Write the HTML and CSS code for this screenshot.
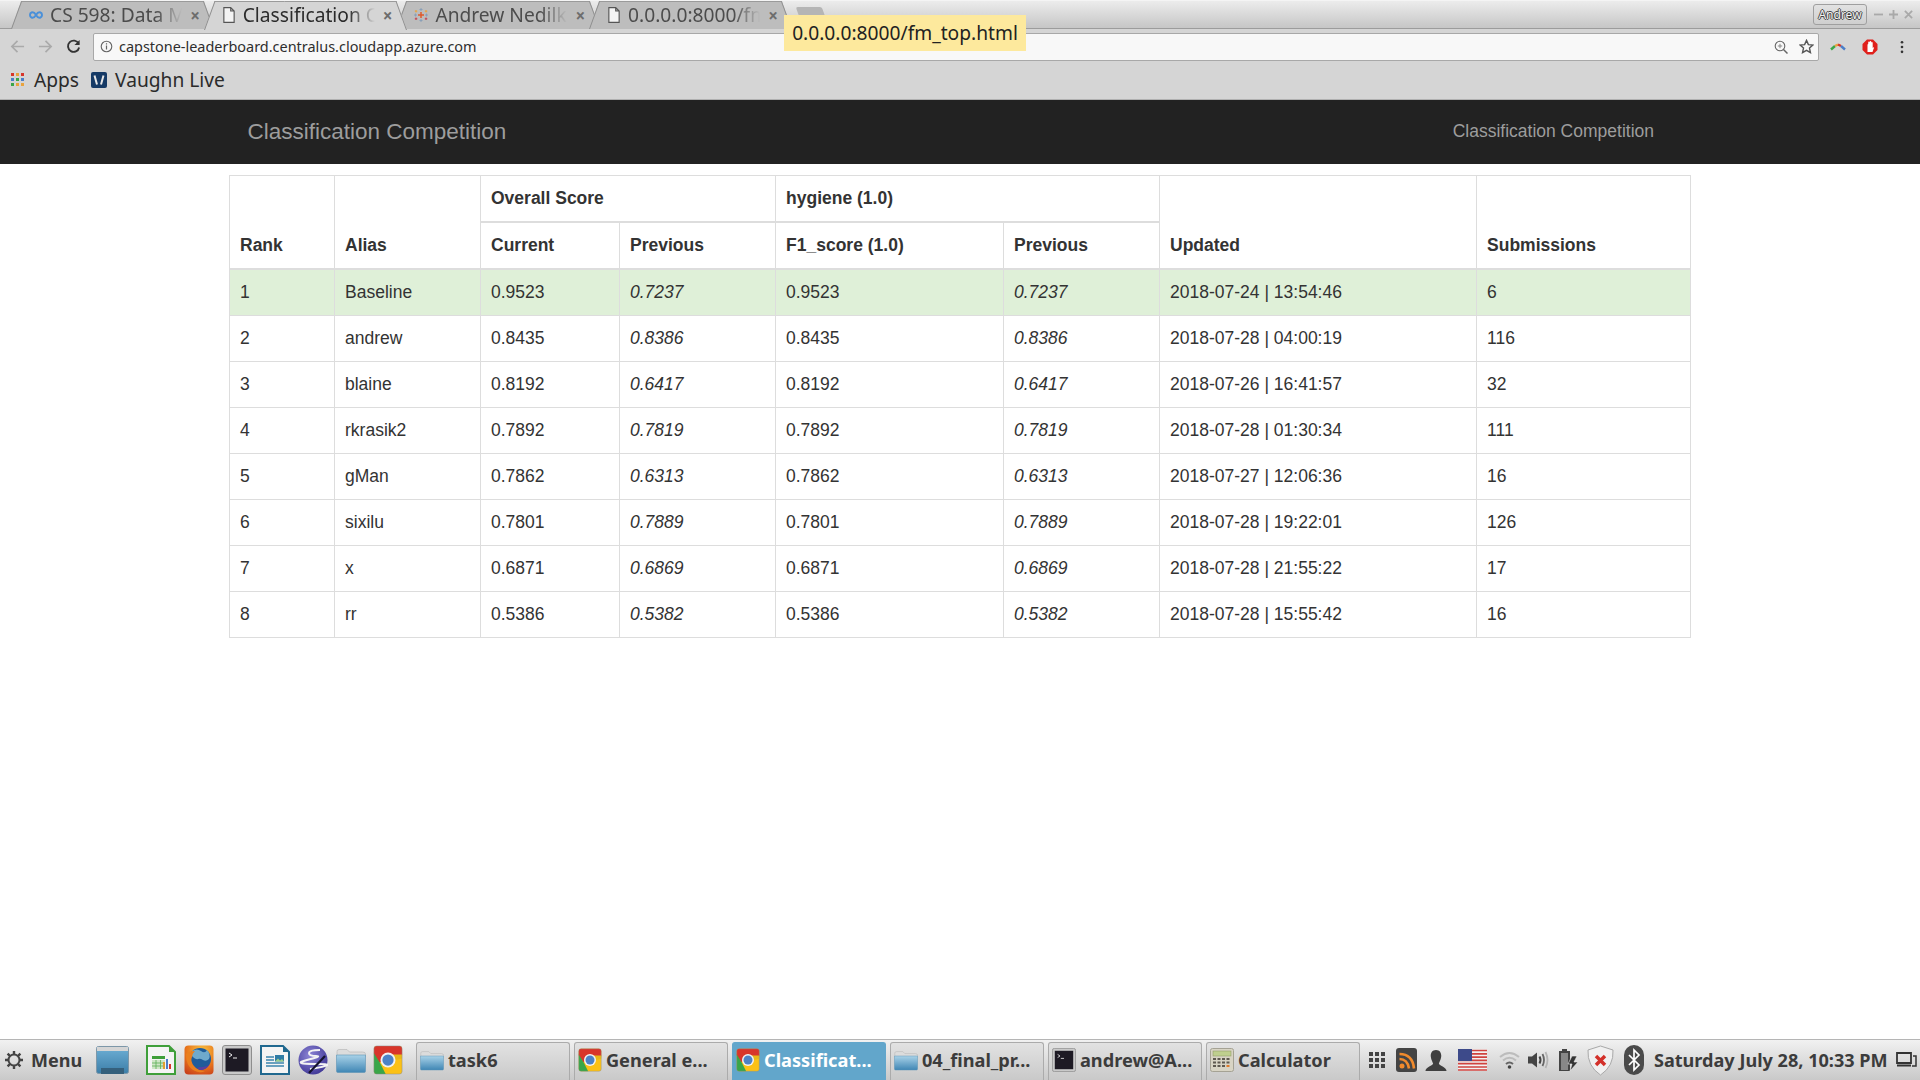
FILE: index.html
```html
<!DOCTYPE html>
<html lang="en">
<head>
    <meta charset="UTF-8">
    <title>Classification Competition</title>
    <link rel="stylesheet" href="styles.css">
</head>
<body>
    <!-- shared icons -->
    <svg class="sprite" xmlns="http://www.w3.org/2000/svg">
        <defs>
            <linearGradient id="folder-grad" x1="0" y1="0" x2="0" y2="1">
                <stop offset="0" stop-color="#a9d2e8"/>
                <stop offset="1" stop-color="#3f86b4"/>
            </linearGradient>
            <clipPath id="chrome-clip"><rect x="1" y="1" width="30" height="30" rx="3"/></clipPath>
            <symbol id="i-doc" viewBox="0 0 12 14">
                <path d="M1.5.5h6l3 3v10h-9z M7.5.5v3h3" fill="#f4f4f4" stroke="#555" stroke-width="1"/>
            </symbol>
            <symbol id="i-chrome" viewBox="0 0 32 32">
                <g clip-path="url(#chrome-clip)">
                    <rect width="32" height="32" fill="#fbc116"/>
                    <path d="M0 0h32v11H16L7 19 0 9z" fill="#d8352a"/>
                    <path d="M0 7l8 13 6 12H0z" fill="#3aa648"/>
                    <path d="M16 10h16v4l-16 4z" fill="#e8b817"/>
                    <circle cx="16" cy="16" r="8" fill="#f2f2f2"/>
                    <circle cx="16" cy="16" r="6" fill="#4c82c6"/>
                </g>
                <rect x="1" y="1" width="30" height="30" rx="3" fill="none" stroke="#8a8a8a" stroke-opacity=".5"/>
            </symbol>
            <symbol id="i-folder" viewBox="0 0 30 26">
                <path d="M1 4.5q0-2 2-2h8l2.500 2.500h13q3 0 3 2v3H1z" fill="#dcdcdc" stroke="#aaa" stroke-width=".5"/>
                <path d="M.5 8h29v16q0 1.500-1.500 1.500H2Q.5 25.500.5 24z" fill="url(#folder-grad)" stroke="#5d93b5" stroke-width=".6"/>
            </symbol>
            <symbol id="i-term" viewBox="0 0 30 30">
                <rect x=".5" y=".5" width="29" height="29" rx="2.500" fill="#c9c9c9" stroke="#8e8e8e"/>
                <rect x="3.500" y="3.500" width="23" height="23" fill="#1d1a24"/>
                <path d="M7 8l3 2-3 2M11 13h4" fill="none" stroke="#eee" stroke-width="1"/>
            </symbol>
        </defs>
    </svg>

    <div class="chrome">
        <div class="tabstrip">
            <div class="tab">
                <svg class="favicon" viewBox="0 0 16 16"><path d="M8 8C6.500 5.500 4.800 5 3.500 5.500 1.500 6.300 1.500 9.700 3.500 10.500 4.800 11 6.500 10.500 8 8c1.500-2.500 3.200-3 4.500-2.500 2 .8 2 4.200 0 5C11.200 11 9.500 10.500 8 8z" fill="none" stroke="#4a90d9" stroke-width="2"/></svg>
                <span class="tab-title">CS 598: Data M</span>
                <span class="tab-close">×</span>
            </div>
            <div class="tab tab-active">
                <svg class="favicon"><use href="#i-doc"/></svg>
                <span class="tab-title">Classification C</span>
                <span class="tab-close">×</span>
            </div>
            <div class="tab">
                <svg class="favicon" viewBox="0 0 16 16">
                    <path d="M8 5v6M5 8h6" stroke="#e0592a" stroke-width="1.500"/>
                    <path d="M8 1v3M6.500 2.500h3M8 12v3M6.500 13.500h3M1 8h3M2.500 6.500v3M12 8h3M13.500 6.500v3" stroke="#8aa0b8" stroke-width="1"/>
                    <path d="M3 3v2.500M1.800 4.200h2.500M13 3v2.500M11.800 4.200h2.500" stroke="#e8a33d" stroke-width="1"/>
                    <path d="M3 10.500V13M1.800 11.800h2.500M13 10.500V13M11.800 11.800h2.500" stroke="#c7404d" stroke-width="1"/>
                </svg>
                <span class="tab-title">Andrew Nedilk</span>
                <span class="tab-close">×</span>
            </div>
            <div class="tab">
                <svg class="favicon"><use href="#i-doc"/></svg>
                <span class="tab-title">0.0.0.0:8000/fm</span>
                <span class="tab-close">×</span>
            </div>
            <div class="newtab"></div>
            <div class="profile-btn">Andrew</div>
            <div class="win-controls">
                <svg viewBox="0 0 10 10"><path d="M0 5h10" stroke="#a9a9a9" stroke-width="2"/></svg>
                <svg viewBox="0 0 10 10"><path d="M0 5h10M5 0v10" stroke="#a9a9a9" stroke-width="2"/></svg>
                <svg viewBox="0 0 10 10"><path d="M1 1l8 8M9 1l-8 8" stroke="#a9a9a9" stroke-width="2"/></svg>
            </div>
        </div>
        <div class="tooltip">0.0.0.0:8000/fm_top.html</div>

        <div class="toolbar">
            <svg class="nav-btn" viewBox="0 0 16 16"><path d="M15 8H2M8 2L2 8l6 6" fill="none" stroke="#aaa" stroke-width="1.800"/></svg>
            <svg class="nav-btn" viewBox="0 0 16 16"><path d="M1 8h13M8 2l6 6-6 6" fill="none" stroke="#aaa" stroke-width="1.800"/></svg>
            <svg class="nav-btn" viewBox="0 0 16 16"><path d="M13.500 5A6 6 0 1 0 14 9" fill="none" stroke="#333" stroke-width="2"/><path d="M14.500 1v5.500H9z" fill="#333"/></svg>
            <div class="omnibox">
                <svg class="info-icon" viewBox="0 0 14 14"><circle cx="7" cy="7" r="5.700" fill="none" stroke="#666" stroke-width="1.200"/><path d="M7 6v4.200M7 3.500v1.300" stroke="#666" stroke-width="1.300"/></svg>
                <span class="url">capstone-leaderboard.centralus.cloudapp.azure.com</span>
                <svg class="zoom-icon" viewBox="0 0 14 14"><circle cx="6" cy="6" r="4.800" fill="none" stroke="#666" stroke-width="1.100"/><path d="M9.500 9.500L13.500 13.500" stroke="#666" stroke-width="1.500"/><path d="M6 3.800v4.400M3.800 6h4.400" stroke="#888"/></svg>
                <svg class="star-icon" viewBox="0 0 16 16"><path d="M8 1.500l2 4.500 4.800.5-3.600 3.200 1 4.800L8 12.100 3.800 14.500l1-4.800L1.200 6.500 6 6z" fill="none" stroke="#555" stroke-width="1.500"/></svg>
            </div>
            <svg class="ext-arc" viewBox="0 0 16 8">
                <path d="M1 6.500L5 3" stroke="#3aa648" stroke-width="2.400"/>
                <path d="M5 3L8 1.500" stroke="#e8a33d" stroke-width="2.400"/>
                <path d="M8 1.500L11 3" stroke="#d8352a" stroke-width="2.400"/>
                <path d="M11 3L15 6.500" stroke="#4a7ec8" stroke-width="2.400"/>
            </svg>
            <svg class="ext-stop" viewBox="0 0 16 16">
                <path d="M5 .5h6L15.500 5v6L11 15.500H5L.5 11V5z" fill="#e0201c"/>
                <path d="M5.500 13V6q0-1 .7-1V3.500q0-1 .8-1t.8 1V3q0-1 .7-1 .8 0 .8 1v.8q0-.8.7-.8t.7 1v5q.8-1 1.300-.6.300.3-.4 1.400L10.500 13z" fill="#fff"/>
            </svg>
            <svg class="menu-dots" viewBox="0 0 4 16"><circle cx="2" cy="2.500" r="1.500" fill="#333"/><circle cx="2" cy="8" r="1.500" fill="#333"/><circle cx="2" cy="13.500" r="1.500" fill="#333"/></svg>
        </div>

        <div class="bookmarks">
            <svg class="apps-icon" viewBox="0 0 14 14">
                <rect x="0" y="0" width="3" height="3" fill="#d8352a"/><rect x="5" y="0" width="3" height="3" fill="#e8a33d"/><rect x="10" y="0" width="3" height="3" fill="#d8352a"/>
                <rect x="0" y="5" width="3" height="3" fill="#4a7ec8"/><rect x="5" y="5" width="3" height="3" fill="#3aa648"/><rect x="10" y="5" width="3" height="3" fill="#4a7ec8"/>
                <rect x="0" y="10" width="3" height="3" fill="#3aa648"/><rect x="5" y="10" width="3" height="3" fill="#e8a33d"/><rect x="10" y="10" width="3" height="3" fill="#e8a33d"/>
            </svg>
            <span class="bm-label">Apps</span>
            <svg class="vaughn-icon" viewBox="0 0 16 16"><rect width="16" height="16" rx="2" fill="#163a66"/><path d="M3.500 3.500l2.500 9M12.500 3.500l-2.500 9" stroke="#e8e8e8" stroke-width="2"/></svg>
            <span class="bm-label">Vaughn Live</span>
        </div>
    </div>

    <div class="navbar">
        <div class="container navbar-inner">
            <a class="navbar-brand">Classification Competition</a>
            <a class="nav-link">Classification Competition</a>
        </div>
    </div>

    <div class="container page">
        <table class="table">
            <colgroup>
                <col class="col-rank"><col class="col-alias"><col class="col-cur"><col class="col-prev">
                <col class="col-f1"><col class="col-prev"><col class="col-updated"><col class="col-subs">
            </colgroup>
            <thead>
                <tr>
                    <th rowspan="2">Rank</th>
                    <th rowspan="2">Alias</th>
                    <th colspan="2">Overall Score</th>
                    <th colspan="2">hygiene (1.0)</th>
                    <th rowspan="2">Updated</th>
                    <th rowspan="2">Submissions</th>
                </tr>
                <tr>
                    <th>Current</th>
                    <th>Previous</th>
                    <th>F1_score (1.0)</th>
                    <th>Previous</th>
                </tr>
            </thead>
            <tbody>
                <tr class="success">
                    <td>1</td><td>Baseline</td><td>0.9523</td><td><em>0.7237</em></td><td>0.9523</td><td><em>0.7237</em></td><td>2018-07-24 | 13:54:46</td><td>6</td>
                </tr>
                <tr>
                    <td>2</td><td>andrew</td><td>0.8435</td><td><em>0.8386</em></td><td>0.8435</td><td><em>0.8386</em></td><td>2018-07-28 | 04:00:19</td><td>116</td>
                </tr>
                <tr>
                    <td>3</td><td>blaine</td><td>0.8192</td><td><em>0.6417</em></td><td>0.8192</td><td><em>0.6417</em></td><td>2018-07-26 | 16:41:57</td><td>32</td>
                </tr>
                <tr>
                    <td>4</td><td>rkrasik2</td><td>0.7892</td><td><em>0.7819</em></td><td>0.7892</td><td><em>0.7819</em></td><td>2018-07-28 | 01:30:34</td><td>111</td>
                </tr>
                <tr>
                    <td>5</td><td>gMan</td><td>0.7862</td><td><em>0.6313</em></td><td>0.7862</td><td><em>0.6313</em></td><td>2018-07-27 | 12:06:36</td><td>16</td>
                </tr>
                <tr>
                    <td>6</td><td>sixilu</td><td>0.7801</td><td><em>0.7889</em></td><td>0.7801</td><td><em>0.7889</em></td><td>2018-07-28 | 19:22:01</td><td>126</td>
                </tr>
                <tr>
                    <td>7</td><td>x</td><td>0.6871</td><td><em>0.6869</em></td><td>0.6871</td><td><em>0.6869</em></td><td>2018-07-28 | 21:55:22</td><td>17</td>
                </tr>
                <tr>
                    <td>8</td><td>rr</td><td>0.5386</td><td><em>0.5382</em></td><td>0.5386</td><td><em>0.5382</em></td><td>2018-07-28 | 15:55:42</td><td>16</td>
                </tr>
            </tbody>
        </table>
    </div>

    <div class="taskbar">
        <div class="menu-btn">
            <svg class="gear" viewBox="0 0 20 20"><circle cx="10" cy="10" r="5.500" fill="none" stroke="#444" stroke-width="2"/><path d="M10 1v3.500M10 15.500V19M1 10h3.500M15.500 10H19M3.600 3.600l2.500 2.500M13.900 13.900l2.500 2.500M3.600 16.400l2.500-2.500M13.900 6.100l2.500-2.500" stroke="#444" stroke-width="2.400"/></svg>
            <span>Menu</span>
        </div>
        <div class="launchers">
            <svg class="launch launch-desktop" viewBox="0 0 33 28">
                <defs><linearGradient id="desk-grad" x1="0" y1="0" x2="0" y2="1"><stop offset="0" stop-color="#6fb0d6"/><stop offset="1" stop-color="#3c7ea8"/></linearGradient></defs>
                <rect x=".5" y=".5" width="32" height="27" rx="2" fill="url(#desk-grad)" stroke="#7d97a8"/>
                <rect x="1" y="1" width="31" height="4" fill="#d5d5d5"/>
                <rect x="5" y="22" width="23" height="6" fill="#35607c"/>
            </svg>
            <svg class="launch" viewBox="0 0 30 30">
                <path d="M1 1h22l6 6v22H1z" fill="#f4f4f4" stroke="#3f9f3a" stroke-width="2"/>
                <path d="M23 1v6h6z" fill="#3f9f3a"/>
                <rect x="6" y="11" width="13" height="3" fill="#3f9f3a"/>
                <path d="M6 15h13v9H6z" fill="#cfe6c6"/>
                <path d="M6 18h13M6 21h13M10 15v9M14.500 15v9" stroke="#5cae55" stroke-width=".8"/>
                <rect x="17" y="17" width="2" height="7" fill="#e0a030"/><rect x="20" y="14" width="2" height="10" fill="#4a7ec8"/><rect x="23" y="19" width="2" height="5" fill="#d8352a"/>
            </svg>
            <svg class="launch" viewBox="0 0 30 30">
                <defs><radialGradient id="fox-grad" cx=".6" cy=".2" r=".9"><stop offset="0" stop-color="#f9c440"/><stop offset=".6" stop-color="#e8751c"/><stop offset="1" stop-color="#c9411b"/></radialGradient></defs>
                <rect x=".5" y=".5" width="29" height="29" rx="4" fill="url(#fox-grad)"/>
                <circle cx="16" cy="14" r="11" fill="#1f5c9a"/>
                <path d="M8 6q5-3 9 0t6-1q4 4 2 9-3 3-6 1t-5-1-6-3z" fill="#6fa9cc"/>
                <path d="M16 25q6 0 10-6-3 3-7 3t-6 1z" fill="#5b3fa0"/>
                <path d="M2 9q0 15 12 18 4 1 7-1-7 0-11-5T8 12q0-3 3-6-6 0-9 3z" fill="#ea7f1e"/>
            </svg>
            <svg class="launch"><use href="#i-term"/></svg>
            <svg class="launch" viewBox="0 0 30 30">
                <path d="M1 1h22l6 6v22H1z" fill="#f4f4f4" stroke="#20688f" stroke-width="2"/>
                <path d="M23 1v6h6z" fill="#20688f"/>
                <path d="M6 12h8M6 15h8M6 18h18M6 21h18" stroke="#3a84ad" stroke-width="1.500"/>
                <rect x="15" y="10" width="9" height="6.500" fill="#2f7ca6"/>
                <path d="M15 16.500l3-3 2 2 2-1.500 2 2.500z" fill="#9ccf8a"/>
            </svg>
            <svg class="launch" viewBox="0 0 30 30">
                <defs><radialGradient id="emacs-grad" cx=".4" cy=".35" r=".7"><stop offset="0" stop-color="#8e86d6"/><stop offset="1" stop-color="#3f3796"/></radialGradient></defs>
                <circle cx="15" cy="15" r="14.500" fill="url(#emacs-grad)"/>
                <path d="M22 5q-11 0-11 3t7 3-9 4 9 4-6 5" fill="none" stroke="#f4f4f4" stroke-width="2"/>
                <path d="M11 28L27 11" stroke="#15132e" stroke-width="2.200"/>
            </svg>
            <svg class="launch"><use href="#i-folder"/></svg>
            <svg class="launch"><use href="#i-chrome"/></svg>
        </div>
        <div class="winlist">
            <div class="win-btn"><svg class="win-icon"><use href="#i-folder"/></svg><span>task6</span></div>
            <div class="win-btn"><svg class="win-icon"><use href="#i-chrome"/></svg><span>General e...</span></div>
            <div class="win-btn win-active"><svg class="win-icon"><use href="#i-chrome"/></svg><span>Classificat...</span></div>
            <div class="win-btn"><svg class="win-icon"><use href="#i-folder"/></svg><span>04_final_pr...</span></div>
            <div class="win-btn"><svg class="win-icon"><use href="#i-term"/></svg><span>andrew@A...</span></div>
            <div class="win-btn">
                <svg class="win-icon" viewBox="0 0 24 24">
                    <rect x=".5" y=".5" width="23" height="23" rx="2" fill="#d8d4c4" stroke="#a5a294"/>
                    <rect x="3" y="3" width="18" height="5" fill="#bfcf8e" stroke="#8a9462" stroke-width=".5"/>
                    <path d="M3 11h3M7.500 11h3M12 11h3M16.500 11h3M3 14.500h3M7.500 14.500h3M12 14.500h3M16.500 14.500h3M3 18h3M7.500 18h3M12 18h3" stroke="#5f5a50" stroke-width="2"/>
                    <path d="M16.500 18h3" stroke="#e07b2a" stroke-width="2"/>
                </svg>
                <span>Calculator</span>
            </div>
        </div>
        <div class="tray">
            <svg class="tray-grid" viewBox="0 0 18 18">
                <path d="M1 1h4v4H1zM7 1h4v4H7zM13 1h4v4h-4zM1 7h4v4H1zM7 7h4v4H7zM13 7h4v4h-4zM1 13h4v4H1zM7 13h4v4H7zM13 13h4v4h-4z" fill="#444"/>
            </svg>
            <svg class="tray-rss" viewBox="0 0 21 24">
                <rect width="21" height="24" rx="3" fill="#444"/>
                <circle cx="6" cy="18" r="2.500" fill="#f08a2c"/>
                <path d="M3.500 11q8 0 9.500 9.500M3.500 6q13 0 14.500 14.500" fill="none" stroke="#f08a2c" stroke-width="2.600"/>
            </svg>
            <svg class="tray-user" viewBox="0 0 22 24"><path d="M11 1c4 0 5.500 3 5.500 6S14.500 14 14 15c0 2 8 4 8 8H0c0-4 8-6 8-8-.5-1-2.500-5-2.500-8S7 1 11 1z" fill="#3f3f3f"/></svg>
            <svg class="tray-flag" viewBox="0 0 29 22">
                <rect width="29" height="22" fill="#f2f2f2"/>
                <path d="M0 1.500h29M0 4.800h29M0 8.100h29M0 11.400h29M0 14.700h29M0 18h29M0 21h29" stroke="#d0433f" stroke-width="1.700"/>
                <rect width="14" height="12" fill="#3d4a8a"/>
            </svg>
            <svg class="tray-wifi" viewBox="0 0 21 18">
                <path d="M1 6q9.500-8 19 0" fill="none" stroke="#bcbcbc" stroke-width="2"/>
                <path d="M4 9.500q6.500-5.500 13 0" fill="none" stroke="#bcbcbc" stroke-width="2"/>
                <path d="M7 13q3.500-3 7 0" fill="none" stroke="#666" stroke-width="2"/>
                <circle cx="10.500" cy="16" r="1.800" fill="#444"/>
            </svg>
            <svg class="tray-vol" viewBox="0 0 21 20">
                <path d="M0 6.500h4L9 2.500v15l-5-4H0z" fill="#444"/>
                <path d="M11.500 6.500q2 3.500 0 7" fill="none" stroke="#444" stroke-width="2"/>
                <path d="M14.500 4q3 6 0 12" fill="none" stroke="#666" stroke-width="1.800"/>
                <path d="M17.500 2q4 8 0 16" fill="none" stroke="#b5b5b5" stroke-width="1.800"/>
            </svg>
            <svg class="tray-batt" viewBox="0 0 22 24">
                <path d="M5 1h5v2h3v20H2V3h3z" fill="#444"/>
                <path d="M4 5h7v17H4z" fill="#888"/>
                <path d="M15 8l-4 8h4l-2 7 8-9h-4l3-6z" fill="#333" stroke="#eee" stroke-width=".6"/>
            </svg>
            <svg class="tray-shield" viewBox="0 0 27 31">
                <path d="M13.500 1L26 5q1 16-12.500 25Q0 21 1 5z" fill="#f0f0f0" stroke="#a8a8a8"/>
                <path d="M9 11l9 9M18 11l-9 9" stroke="#d3302a" stroke-width="3.500"/>
            </svg>
            <svg class="tray-bt" viewBox="0 0 20 30">
                <rect width="20" height="30" rx="10" fill="#4a4a4a"/>
                <path d="M5 10l10 10-5 5V5l5 5L5 20" fill="none" stroke="#fff" stroke-width="1.700"/>
            </svg>
            <span class="clock">Saturday July 28, 10:33 PM</span>
            <svg class="tray-desk" viewBox="0 0 21 18">
                <path d="M1 2h14v10H1zM1 14.500h14" fill="none" stroke="#333" stroke-width="1.800"/>
                <path d="M17 5h3v10h-4" fill="none" stroke="#333" stroke-width="1.500"/>
            </svg>
        </div>
    </div>
</body>
</html>
```

FILE: styles.css
```css
html, body {
    height: 100%;
}

body {
    margin: 0;
    display: flex;
    flex-direction: column;
    overflow: hidden;
    background-color: #ffffff;
    font-family: "Liberation Sans", Arial, sans-serif;
    color: #333;
}

.sprite {
    display: block;
    width: 0;
    height: 0;
}

/* browser frame */
.chrome {
    position: relative;
    height: 100px;
    flex-shrink: 0;
    background-color: #d5d5d5;
    border-bottom: 1px solid #b0b0b0;
    box-sizing: border-box;
    font-family: "Noto Sans", sans-serif;
}

.tabstrip {
    display: flex;
    height: 29px;
    padding-left: 11px;
    box-sizing: border-box;
    border-top: 1px solid #f4f4f4;
    border-bottom: 1px solid #9c9c9c;
    background: linear-gradient(#ececec, #c6c6c6);
}

.tab {
    position: relative;
    z-index: 1;
    display: flex;
    align-items: center;
    flex-shrink: 0;
    width: 203px;
    height: 28px;
    margin-right: -10.3px;
    padding-left: 17px;
    box-sizing: border-box;
    color: #4c4c4c;
}

.tab::before,
.tab::after {
    content: "";
    position: absolute;
    z-index: -1;
    top: 0;
    bottom: 0;
    width: 55%;
    background-color: #bdbdbd;
    border-top: 1px solid #9a9a9a;
    box-sizing: border-box;
    transform-origin: bottom;
}

.tab::before {
    left: 0;
    border-left: 1px solid #8f8f8f;
    transform: skewX(-20deg);
}

.tab::after {
    right: 0;
    border-right: 1px solid #8f8f8f;
    transform: skewX(20deg);
}

.tab-active {
    z-index: 2;
    height: 29px;
    padding-bottom: 1px;
    color: #2b2b2b;
}

.tab-active::before,
.tab-active::after {
    background-color: #d5d5d5;
}

.favicon {
    flex-shrink: 0;
    width: 16px;
    height: 16px;
    margin-right: 6px;
}

.tab-title {
    width: 132px;
    overflow: hidden;
    white-space: nowrap;
    font-size: 19.2px;
    line-height: 28px;
    -webkit-mask-image: linear-gradient(to right, #000 80%, transparent);
    mask-image: linear-gradient(to right, #000 80%, transparent);
}

.tab-close {
    width: 18px;
    margin-left: 4px;
    text-align: center;
    font-size: 17px;
    font-weight: bold;
    color: #6d6d6d;
}

.newtab {
    flex-shrink: 0;
    width: 26px;
    height: 18px;
    margin: 6px 0 0 17px;
    border-radius: 2px;
    background-color: #b5b5b5;
    transform: skewX(20deg);
}

.profile-btn {
    width: 54px;
    height: 21px;
    margin: 3px 0 0 auto;
    box-sizing: border-box;
    border: 1px solid #9f9f9f;
    border-radius: 3px;
    background: linear-gradient(#e2e2e2, #cfcfcf);
    text-align: center;
    font-size: 12px;
    line-height: 19px;
    color: #f2f2f2;
    text-shadow: -1px 0 #444, 1px 0 #444, 0 -1px #444, 0 1px #444;
}

.win-controls {
    display: flex;
    gap: 6px;
    margin: 9px 7px 0 7px;
}

.win-controls svg {
    display: block;
    width: 9px;
    height: 9px;
}

.tooltip {
    position: absolute;
    z-index: 5;
    left: 784px;
    top: 15px;
    width: 242px;
    height: 36px;
    box-sizing: border-box;
    background-color: #fde99d;
    color: #222;
    text-align: center;
    font-size: 19.2px;
    line-height: 36px;
    white-space: nowrap;
}

.toolbar {
    display: flex;
    align-items: center;
    height: 35px;
    padding-left: 10px;
    box-sizing: border-box;
}

.nav-btn {
    flex-shrink: 0;
    width: 15px;
    height: 15px;
    margin-right: 13px;
}

.omnibox {
    display: flex;
    align-items: center;
    width: 1726px;
    height: 28px;
    margin-left: -1px;
    box-sizing: border-box;
    border: 1px solid #a8a8a8;
    border-radius: 2px;
    background-color: #f8f8f8;
}

.info-icon {
    width: 13px;
    height: 13px;
    margin: 0 6px 0 6px;
}

.url {
    flex: 1;
    font-size: 14.45px;
    color: #2e2e2e;
}

.zoom-icon {
    width: 14px;
    height: 14px;
    margin-right: 11px;
}

.star-icon {
    width: 15px;
    height: 15px;
    margin-right: 4px;
}

.ext-arc {
    width: 16px;
    height: 8px;
    margin-left: 11px;
}

.ext-stop {
    width: 16px;
    height: 16px;
    margin-left: 16px;
}

.menu-dots {
    width: 4px;
    height: 14px;
    margin-left: 22px;
}

.bookmarks {
    display: flex;
    align-items: center;
    height: 32px;
    padding-left: 11px;
    font-size: 19.2px;
    color: #2b2b2b;
}

.apps-icon {
    width: 14px;
    height: 14px;
    margin-right: 9px;
}

.bm-label {
    padding-bottom: 2px;
    line-height: 25px;
}

.vaughn-icon {
    width: 16px;
    height: 16px;
    margin: 0 8px 0 12px;
}

/* page navbar */
.navbar {
    flex-shrink: 0;
    height: 64px;
    background-color: #222;
}

.container {
    width: 1462px;
    margin: 0 auto;
}

.navbar-inner {
    display: flex;
    align-items: center;
    justify-content: space-between;
    height: 100%;
}

.navbar-brand {
    padding-left: 18.5px;
    font-size: 22.5px;
    color: #9d9d9d;
}

.nav-link {
    padding: 0 37px 2px 0;
    font-size: 17.5px;
    color: #9d9d9d;
}

/* leaderboard */
.page {
    flex: 1;
    padding-top: 11px;
}

.table {
    width: 1461px;
    table-layout: fixed;
    border-collapse: collapse;
    font-size: 17.5px;
    line-height: 25px;
}

.col-rank { width: 105px; }
.col-alias { width: 146px; }
.col-cur { width: 139px; }
.col-prev { width: 156px; }
.col-f1 { width: 228px; }
.col-updated { width: 317px; }
.col-subs { width: 214px; }

.table th,
.table td {
    padding: 10px;
    border: 1px solid #ddd;
    text-align: left;
}

.table th {
    vertical-align: bottom;
    border-bottom: 2px solid #ddd;
}

.table .success td {
    background-color: #dff0d8;
}

/* desktop panel */
.taskbar {
    display: flex;
    flex-shrink: 0;
    height: 41px;
    padding-left: 4px;
    box-sizing: border-box;
    border-top: 1px solid #b5b5b5;
    background: linear-gradient(#f1f1f1, #c9c9c9);
    font-family: "Noto Sans", sans-serif;
    font-weight: bold;
    color: #3c3c3c;
}

.menu-btn {
    display: flex;
    align-items: center;
    gap: 7px;
    font-size: 18px;
}

.gear {
    width: 20px;
    height: 20px;
}

.launchers {
    display: flex;
    align-items: center;
    margin-left: 14px;
    height: 40px;
}

.launch {
    width: 30px;
    height: 30px;
    margin-right: 7.9px;
}

.launch-desktop {
    width: 33px;
    height: 28px;
    margin-right: 17px;
}

.winlist {
    display: flex;
    gap: 4px;
    margin-left: 4.6px;
    padding-top: 2px;
}

.win-btn {
    display: flex;
    align-items: center;
    width: 154px;
    height: 38px;
    padding: 0 0 3px 3px;
    box-sizing: border-box;
    border: 1px solid #ababab;
    border-bottom: none;
    border-radius: 3px 3px 0 0;
    background: linear-gradient(#e2e2e2, #c9c9c9);
    font-size: 18.2px;
    white-space: nowrap;
}

.win-active {
    background: #62a6cb;
    border-color: #62a6cb;
    color: #ffffff;
}

.win-icon {
    flex-shrink: 0;
    width: 24px;
    height: 24px;
    margin-right: 4px;
}

.tray {
    display: flex;
    align-items: center;
    margin-left: 8px;
}

.tray-grid { width: 18px; height: 18px; margin-right: 10px; }
.tray-rss { width: 21px; height: 24px; margin-right: 8px; }
.tray-user { width: 22px; height: 23px; margin-right: 11px; }
.tray-flag { width: 29px; height: 22px; margin-right: 12px; }
.tray-wifi { width: 21px; height: 18px; margin-right: 8px; }
.tray-vol { width: 21px; height: 20px; margin-right: 8px; }
.tray-batt { width: 22px; height: 24px; margin-right: 8px; }
.tray-shield { width: 27px; height: 31px; margin-right: 10px; }
.tray-bt { width: 20px; height: 30px; margin-right: 10px; }
.tray-desk { width: 21px; height: 18px; margin-left: 8px; }

.clock {
    font-size: 18.1px;
    white-space: nowrap;
}
```
